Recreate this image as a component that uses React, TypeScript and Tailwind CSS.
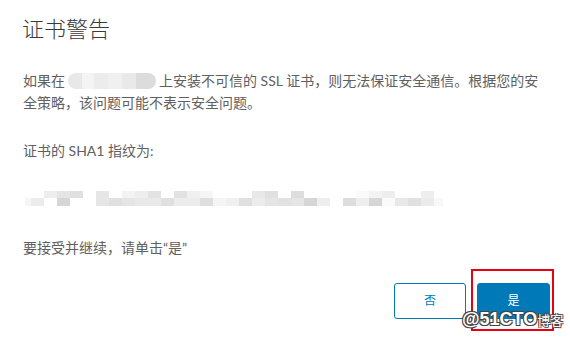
const FINGERPRINT: [string, string, number][] = [
    ['#ffffff', '#f6f6f6', 6],
    ['#ffffff', '#ececec', 13],
    ['#eeeeee', '#ffffff', 13],
    ['#e5e5e5', '#d6d6d6', 13],
    ['#e0e0e0', '#ffffff', 13],
    ['#ffffff', '#ffffff', 13],
    ['#e6e6e6', '#e6e6e6', 13],
    ['#ffffff', '#e0e0e0', 13],
    ['#f3f3f3', '#e5e5e5', 13],
    ['#eeeeee', '#e8e8e8', 13],
    ['#e3e3e3', '#e9e9e9', 13],
    ['#ffffff', '#e0e0e0', 13],
    ['#e2e2e2', '#ececec', 13],
    ['#f0f0f0', '#ececec', 13],
    ['#f5f5f5', '#dedede', 13],
    ['#ffffff', '#f5f5f5', 13],
    ['#ffffff', '#f0f0f0', 13],
    ['#ffffff', '#e0e0e0', 13],
    ['#e8e8e8', '#ececec', 13],
    ['#e0e0e0', '#e5e5e5', 13],
    ['#ffffff', '#e2e2e2', 13],
    ['#dddddd', '#e5e5e5', 13],
    ['#ffffff', '#d6d6d6', 13],
    ['#ffffff', '#eeeeee', 13],
    ['#ffffff', '#ffffff', 13],
    ['#ffffff', '#dddddd', 13],
    ['#fafafa', '#eeeeee', 13],
    ['#f3f3f3', '#d6d6d6', 13],
    ['#eeeeee', '#fafafa', 13],
    ['#ffffff', '#e8e8e8', 13],
    ['#ffffff', '#e0e0e0', 13],
    ['#eeeeee', '#ebebeb', 13],
    ['#ffffff', '#f8f8f8', 9],
]

const HOST: [string, number][] = [
    ['#e8e8e8', 14],
    ['#f4f4f4', 12],
    ['#ececec', 14],
    ['#f0f0f0', 14],
    ['#e9e9e9', 14],
    ['#dcdcdc', 20],
]

function Mosaic() {
    return (
        <div className="flex h-[15px] ml-[2px]">
            {FINGERPRINT.map(([top, bottom, w], i) => (
                <div key={i} className="flex flex-col" style={{ width: w }}>
                    <div className="h-[7px]" style={{ background: top }} />
                    <div className="h-[8px]" style={{ background: bottom }} />
                </div>
            ))}
        </div>
    )
}

function HostBlur() {
    return (
        <span className="inline-flex align-middle h-[16px] mx-[3px] -mt-[3px] rounded-full overflow-hidden">
            {HOST.map(([c, w], i) => (
                <span key={i} className="block h-full" style={{ width: w, background: c }} />
            ))}
        </span>
    )
}

export default function App() {
    return (
        <div className="relative w-[570px] h-[338px] bg-white overflow-hidden text-[#606060] font-['Lato','Noto_Sans_CJK_SC',sans-serif]">
            <div className="flex flex-col pl-[23px] pr-[20px] pt-[16px]">
                <h1 className="text-[22px] leading-[26px] font-light text-[#3a3a3a] -ml-[1px]">证书警告</h1>

                <p className="mt-[28px] text-[14px] leading-[22px]">
                    如果在<HostBlur />上安装不可信的 SSL 证书，则无法保证安全通信。根据您的安
                    <br />
                    全策略，该问题可能不表示安全问题。
                </p>

                <p className="mt-[26px] text-[14px] leading-[22px]">证书的 SHA1 指纹为:</p>

                <div className="mt-[29px]">
                    <Mosaic />
                </div>

                <p className="mt-[31px] text-[14px] leading-[22px]">要接受并继续，请单击“是”</p>

                <div className="mt-[24px] flex justify-end gap-[11px]">
                    <button className="w-[72px] h-[36px] rounded-[3px] border border-[#0079b8] bg-white text-[#0079b8] text-[12px]">
                        否
                    </button>
                    <button className="w-[73px] h-[36px] rounded-[3px] border border-[#0079b8] bg-[#0079b8] text-white text-[12px]">
                        是
                    </button>
                </div>
            </div>

            {/* annotation box */}
            <div className="absolute left-[471px] top-[269px] w-[83px] h-[62px] border-2 border-[#e60012]" />

            {/* watermark */}
            <div className="absolute left-[462px] top-[309px] flex items-end font-['Liberation_Sans','Noto_Sans_CJK_SC',sans-serif] text-white font-bold [text-shadow:_-1px_-1px_0_#444,_1px_-1px_0_#444,_-1px_1px_0_#444,_1px_1px_0_#444]">
                <span className="text-[18px] leading-[20px]">@51CTO</span>
                <span className="text-[13px] leading-[16px] font-normal">博客</span>
            </div>
        </div>
    )
}
